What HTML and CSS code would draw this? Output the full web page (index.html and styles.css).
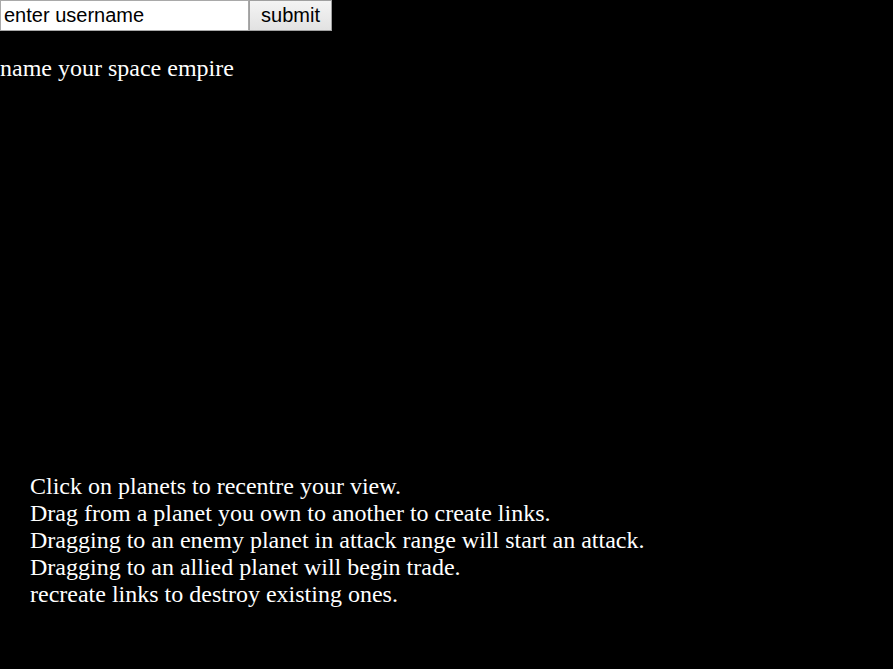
FILE: index.html
```html
<!DOCTYPE html>
<html>
<head>
<meta charset="utf-8">
<link rel="stylesheet" href="styles.css">
</head>
<body>
<form class="login">
  <input class="username" type="text" value="enter username">
  <button class="submit" type="button">submit</button>
</form>
<p class="title">name your space empire</p>
<div class="canvas"></div>
<div class="help">
  <div>Click on planets to recentre your view.</div>
  <div>Drag from a planet you own to another to create links.</div>
  <div>Dragging to an enemy planet in attack range will start an attack.</div>
  <div>Dragging to an allied planet will begin trade.</div>
  <div>recreate links to destroy existing ones.</div>
</div>
</body>
</html>
```

FILE: styles.css
```css
html, body {
  margin: 0;
  padding: 0;
  background: #000;
  color: #fff;
  font-family: "Liberation Serif", "Times New Roman", serif;
}
.login {
  display: flex;
  margin: 0;
  height: 31px;
}
.username {
  box-sizing: border-box;
  width: 249px;
  height: 31px;
  margin: 0;
  padding: 0 3px;
  border: 1px solid #a9a9a9;
  background: #fff;
  color: #000;
  font-family: "Liberation Sans", Arial, sans-serif;
  font-size: 20px;
}
.submit {
  box-sizing: border-box;
  width: 83px;
  height: 31px;
  margin: 0;
  padding: 0;
  border: 1px solid #a0a0a0;
  background: linear-gradient(#f4f4f4, #e2e2e2);
  color: #000;
  font-family: "Liberation Sans", Arial, sans-serif;
  font-size: 20px;
}
.title {
  margin: 24px 0 0 0;
  font-size: 24px;
  line-height: 27px;
}
.canvas {
  height: 391px;
}
.help {
  padding-left: 30px;
  font-size: 24px;
  line-height: 27px;
}
```
